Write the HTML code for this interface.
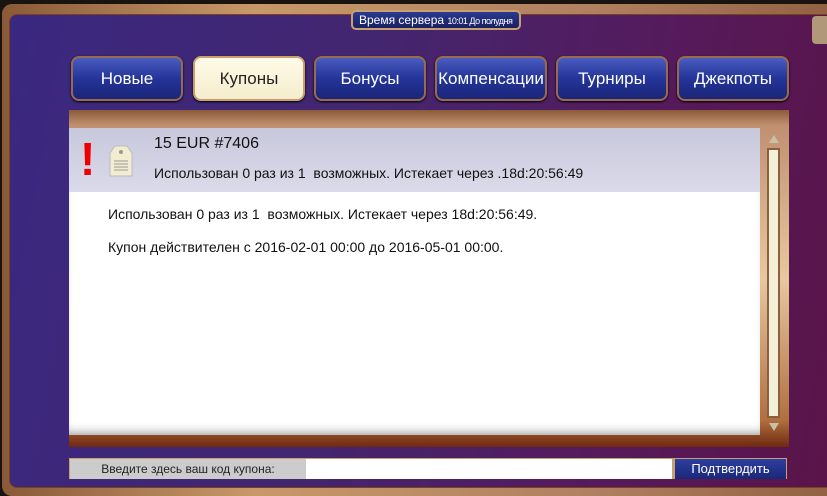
<!DOCTYPE html>
<html><head><meta charset="utf-8"><style>
*{margin:0;padding:0;box-sizing:border-box}
body{width:827px;height:496px;overflow:hidden;background:#1a1410;font-family:"Liberation Sans",sans-serif;position:relative}
.frame{position:absolute;left:2px;top:4px;width:840px;height:492px;border-radius:10px;background:linear-gradient(90deg,#8a5a38,#c89868 30%,#b08060 70%,#906040);}
.panel{position:absolute;left:9px;top:14px;width:830px;height:474px;border-radius:8px;background:linear-gradient(100deg,#3a2880 0%,#432670 40%,#561a5a 75%,#5a1448 100%);border:1px solid #7a4020}
.time{position:absolute;left:351px;top:10px;width:170px;height:20px;border-radius:5px;background:linear-gradient(#2a3a90,#1a2060);border:2px solid #c8a070;color:#fff;font-size:12px;line-height:16px;padding-left:6px;white-space:nowrap}
.time small{font-size:9px;letter-spacing:-.5px}
.tab{position:absolute;top:56px;width:112px;height:45px;border-radius:8px;background:linear-gradient(#4a5cc0,#24349a 50%,#1a2678);border:2px solid #9a6a50;color:#fff;font-size:17px;text-align:center;line-height:41px;box-shadow:0 1px 2px #000}
.tab.act{background:linear-gradient(#fffbe8,#f4eccc);color:#222;border-color:#c8a070}
.content{position:absolute;left:69px;top:110px;width:720px;height:337px;background:linear-gradient(#8a5a38,#c09070 15px,#e8c8a0 50%,#b07040 92%,#702810);}
.white{position:absolute;left:69px;top:128px;width:691px;height:307px;background:#fff;box-shadow:inset 0 -8px 10px -6px #999}
.head{position:absolute;left:69px;top:128px;width:691px;height:64px;background:linear-gradient(#c8c8dc,#dadaea);}
.t1{position:absolute;left:154px;top:135px;font-size:16px;color:#111}
.t2{position:absolute;left:154px;top:165px;font-size:14px;color:#111}
.b1{position:absolute;left:108px;top:206px;font-size:14px;color:#111}
.b2{position:absolute;left:108px;top:239px;font-size:14px;color:#111}
.excl{position:absolute;left:80px;top:134px;color:#e00;font-size:46px;font-weight:bold;line-height:50px}
.sb{position:absolute;left:767px;top:148px;width:13px;height:270px;background:#f4f0d8;border:2px solid #8a6040}
.input{position:absolute;left:69px;top:458px;width:718px;height:21px;background:#c8a070;}
.lbl{position:absolute;left:70px;top:459px;width:236px;height:20px;background:#ccc;font-size:12px;color:#222;text-align:center;line-height:20px}
.fld{position:absolute;left:306px;top:459px;width:366px;height:20px;background:#fff}
.btn{position:absolute;left:675px;top:459px;width:111px;height:20px;background:linear-gradient(#2c3ea0,#1a2878);color:#fff;font-size:13px;text-align:center;line-height:20px}
</style></head><body>
<div class="frame"></div>
<div class="panel"></div>
<div style="position:absolute;left:812px;top:16px;width:15px;height:28px;background:#b09878;border-radius:4px 0 0 4px"></div>
<div class="time">Время сервера <small>10:01 До полудня</small></div>
<div class="tab" style="left:71px">Новые</div>
<div class="tab act" style="left:193px">Купоны</div>
<div class="tab" style="left:314px">Бонусы</div>
<div class="tab" style="left:435px">Компенсации</div>
<div class="tab" style="left:556px">Турниры</div>
<div class="tab" style="left:677px">Джекпоты</div>
<div class="content"></div>
<div class="white"></div>
<div class="head"></div>
<div class="excl">!</div>
<svg style="position:absolute;left:108px;top:144px" width="26" height="33" viewBox="0 0 26 33"><path d="M7 2H19L24 9V32H2V9Z" fill="#f2ecd0" stroke="#bbb"/><circle cx="13" cy="8" r="2" fill="#999"/><g stroke="#999"><line x1="6" y1="17" x2="20" y2="17"/><line x1="6" y1="20" x2="20" y2="20"/><line x1="6" y1="23" x2="20" y2="23"/><line x1="6" y1="26" x2="20" y2="26"/></g></svg>
<div class="t1">15 EUR #7406</div>
<div class="t2">Использован 0 раз из 1&nbsp; возможных. Истекает через .18d:20:56:49</div>
<div class="b1">Использован 0 раз из 1&nbsp; возможных. Истекает через 18d:20:56:49.</div>
<div class="b2">Купон действителен с 2016-02-01 00:00 до 2016-05-01 00:00.</div>
<div style="position:absolute;left:769px;top:135px;width:0;height:0;border-left:5px solid transparent;border-right:5px solid transparent;border-bottom:8px solid #c8c0a8"></div>
<div class="sb"></div>
<div style="position:absolute;left:769px;top:423px;width:0;height:0;border-left:5px solid transparent;border-right:5px solid transparent;border-top:8px solid #c8c0a8"></div>
<div class="input"></div>
<div class="lbl">Введите здесь ваш код купона:</div>
<div class="fld"></div>
<div class="btn">Подтвердить</div>
</body></html>
